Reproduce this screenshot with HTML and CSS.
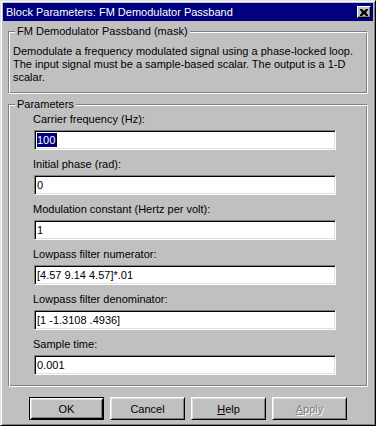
FILE: index.html
```html
<!DOCTYPE html>
<html lang="en">
<head>
    <meta charset="UTF-8">
    <title>Block Parameters: FM Demodulator Passband</title>
    <link rel="stylesheet" href="styles.css">
</head>
<body>
    <div class="window">
        <div class="titlebar">
            <span class="title">Block Parameters: FM Demodulator Passband</span>
            <div class="close-btn">
                <svg width="8" height="7" viewBox="0 0 8 7">
                    <path d="M0 0h2l2 2 2-2h2v1l-2 2.5 2 2.5v1h-2l-2-2-2 2h-2v-1l2-2.5-2-2.5z" fill="#000"/>
                </svg>
            </div>
        </div>

        <div class="group group-mask">
            <span class="legend">FM Demodulator Passband (mask)</span>
            <p class="description">Demodulate a frequency modulated signal using a phase-locked loop.<br>The input signal must be a sample-based scalar. The output is a 1-D<br>scalar.</p>
        </div>

        <div class="group group-params">
            <span class="legend">Parameters</span>
            <div class="param">
                <label>Carrier frequency (Hz):</label>
                <div class="field"><span class="selected">100</span><span class="caret"></span></div>
            </div>
            <div class="param">
                <label>Initial phase (rad):</label>
                <div class="field">0</div>
            </div>
            <div class="param">
                <label>Modulation constant (Hertz per volt):</label>
                <div class="field">1</div>
            </div>
            <div class="param">
                <label>Lowpass filter numerator:</label>
                <div class="field">[4.57 9.14 4.57]*.01</div>
            </div>
            <div class="param">
                <label>Lowpass filter denominator:</label>
                <div class="field">[1 -1.3108 .4936]</div>
            </div>
            <div class="param">
                <label>Sample time:</label>
                <div class="field">0.001</div>
            </div>
        </div>

        <div class="buttons">
            <button class="btn btn-default">OK</button>
            <button class="btn">Cancel</button>
            <button class="btn"><u>H</u>elp</button>
            <button class="btn btn-disabled"><u>A</u>pply</button>
        </div>
    </div>
</body>
</html>
```

FILE: styles.css
```css
body {
    margin: 0;
    font-family: "Liberation Sans", Arial, sans-serif;
    font-size: 11px;
    color: #000;
    background: #c0c0c0;
}

.window {
    width: 376px;
    height: 426px;
    box-sizing: border-box;
    background: #c0c0c0;
    border: 1px solid;
    border-color: #dfdfdf #000 #000 #dfdfdf;
    box-shadow: inset 1px 1px #fff, inset -1px -1px #808080;
    padding: 2px;
    display: flex;
    flex-direction: column;
}

.titlebar {
    height: 18px;
    background: #000080;
    color: #fff;
    display: flex;
    align-items: center;
    justify-content: space-between;
    padding: 0 2px 0 3px;
}

.title {
    font-size: 11px;
}

.close-btn {
    width: 14px;
    height: 12px;
    box-sizing: border-box;
    background: #c0c0c0;
    border: 1px solid;
    border-color: #fff #000 #000 #fff;
    box-shadow: inset -1px -1px #808080;
    display: flex;
    align-items: center;
    justify-content: center;
}

.close-btn svg {
    display: block;
}

.group {
    position: relative;
    margin: 0 5px;
    border: 1px solid;
    border-color: #808080 #fff #fff #808080;
    box-shadow: inset 1px 1px #fff, inset -1px -1px #808080;
    box-sizing: border-box;
}

.legend {
    position: absolute;
    top: -7px;
    left: 6px;
    padding: 0 2px;
    line-height: 13px;
    background: #c0c0c0;
}

.group-mask {
    margin-top: 10px;
    height: 63px;
    padding: 13px 4px 0;
}

.description {
    margin: 0;
    line-height: 13px;
}

.group-params {
    margin-top: 10px;
    height: 283px;
    padding: 8px 0 0 24px;
}

.param {
    display: flex;
    flex-direction: column;
    align-items: flex-start;
    margin-bottom: 8px;
}

.param label {
    line-height: 13px;
    height: 13px;
    margin-bottom: 4px;
}

.field {
    width: 302px;
    height: 20px;
    box-sizing: border-box;
    margin-left: 1px;
    background: #fff;
    border: 1px solid;
    border-color: #808080 #fff #fff #808080;
    box-shadow: inset 1px 1px #000, inset -1px -1px #dfdfdf;
    padding: 0 2px;
    line-height: 18px;
    display: flex;
    align-items: center;
}

.selected {
    background: #000080;
    color: #fff;
    line-height: 14px;
    padding-right: 1px;
}

.caret {
    width: 1px;
    height: 14px;
    background: #000;
}

.buttons {
    margin-top: 10px;
    display: flex;
    justify-content: center;
    gap: 6px;
}

.btn {
    width: 75px;
    height: 23px;
    box-sizing: border-box;
    font-family: "Liberation Sans", Arial, sans-serif;
    font-size: 11px;
    color: #000;
    background: #c0c0c0;
    border: 1px solid;
    border-color: #fff #000 #000 #fff;
    box-shadow: inset 1px 1px #dfdfdf, inset -1px -1px #808080;
    padding: 0;
}

.btn-default {
    border-color: #000;
    box-shadow: inset 1px 1px #fff, inset -1px -1px #000, inset 2px 2px #dfdfdf, inset -2px -2px #808080;
}

.btn-disabled {
    color: #808080;
    text-shadow: 1px 1px #fff;
}
```
